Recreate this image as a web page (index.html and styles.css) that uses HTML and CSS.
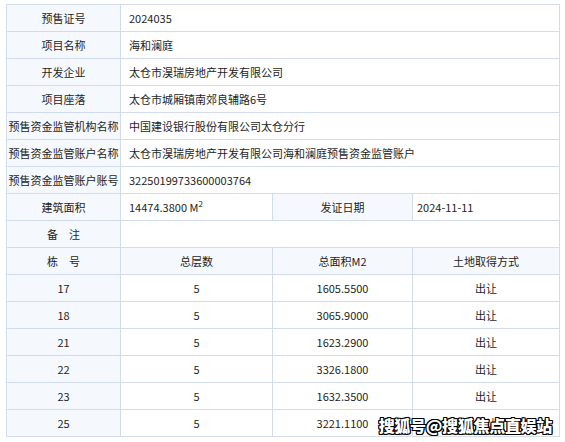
FILE: index.html
```html
<!DOCTYPE html>
<html lang="zh">
<head>
<meta charset="utf-8">
<link rel="stylesheet" href="styles.css">
</head>
<body>
<div class="page">
<table class="info">
  <colgroup><col class="c1"><col class="c2"><col class="c3"><col class="c4"></colgroup>
  <tr><td class="lbl">预售证号</td><td class="val" colspan="3">2024035</td></tr>
  <tr><td class="lbl">项目名称</td><td class="val" colspan="3">海和澜庭</td></tr>
  <tr><td class="lbl">开发企业</td><td class="val" colspan="3">太仓市淏瑞房地产开发有限公司</td></tr>
  <tr><td class="lbl">项目座落</td><td class="val" colspan="3">太仓市城厢镇南郊良辅路6号</td></tr>
  <tr><td class="lbl">预售资金监管机构名称</td><td class="val" colspan="3">中国建设银行股份有限公司太仓分行</td></tr>
  <tr><td class="lbl">预售资金监管账户名称</td><td class="val" colspan="3">太仓市淏瑞房地产开发有限公司海和澜庭预售资金监管账户</td></tr>
  <tr><td class="lbl">预售资金监管账户账号</td><td class="val" colspan="3">32250199733600003764</td></tr>
  <tr><td class="lbl">建筑面积</td><td class="val">14474.3800 M<sup>2</sup></td><td class="lbl">发证日期</td><td class="val val-s">2024-11-11</td></tr>
  <tr><td class="lbl">备&emsp;注</td><td class="val" colspan="3"></td></tr>
  <tr class="head"><td>栋&emsp;号</td><td>总层数</td><td>总面积M2</td><td>土地取得方式</td></tr>
  <tr class="row"><td class="lbl">17</td><td>5</td><td>1605.5500</td><td>出让</td></tr>
  <tr class="row"><td class="lbl">18</td><td>5</td><td>3065.9000</td><td>出让</td></tr>
  <tr class="row"><td class="lbl">21</td><td>5</td><td>1623.2900</td><td>出让</td></tr>
  <tr class="row"><td class="lbl">22</td><td>5</td><td>3326.1800</td><td>出让</td></tr>
  <tr class="row"><td class="lbl">23</td><td>5</td><td>1632.3500</td><td>出让</td></tr>
  <tr class="row"><td class="lbl">25</td><td>5</td><td>3221.1100</td><td>出让</td></tr>
</table>
<div class="watermark">搜狐号@搜狐焦点直娱站</div>
</div>
</body>
</html>
```
FILE: styles.css
```css
html, body {
  margin: 0;
  padding: 0;
  background: #ffffff;
}
.page {
  position: relative;
  width: 565px;
  height: 442px;
  padding: 4px 0 0 6px;
  box-sizing: border-box;
}
.info {
  border-collapse: collapse;
  table-layout: fixed;
  width: 553px;
  font-family: "Noto Sans CJK SC", "Noto Sans", sans-serif;
  font-size: 11px;
  color: #1e1e1e;
}
.c1 { width: 114px; }
.c2 { width: 152px; }
.c3 { width: 140px; }
.c4 { width: 147px; }
.info td {
  border: 1px solid #d2dcec;
  height: 26px;
  padding: 0;
  line-height: 14px;
  white-space: nowrap;
  overflow: hidden;
}
.info tr {
  height: 27px;
}
.lbl {
  background: #f5f8fd;
  text-align: center;
}
.val {
  text-align: left;
  padding-left: 8px !important;
  background: #ffffff;
}
.val-s {
  padding-left: 4px !important;
}
.val sup {
  font-size: 8px;
  line-height: 0;
  vertical-align: 5px;
}
.head td {
  background: #f5f8fd;
  text-align: center;
}
.row td {
  text-align: center;
}
.watermark {
  position: absolute;
  right: 13px;
  bottom: 8px;
  font-family: "Noto Sans CJK SC", sans-serif;
  font-weight: 900;
  font-size: 16px;
  line-height: 18px;
  color: #ffffff;
  letter-spacing: -0.3px;
  text-shadow: 1px 0 0 #000, -1px 0 0 #000, 0 1px 0 #000, 0 -1px 0 #000,
    1px 1px 0 #000, -1px -1px 0 #000, 1px -1px 0 #000, -1px 1px 0 #000;
}
```
